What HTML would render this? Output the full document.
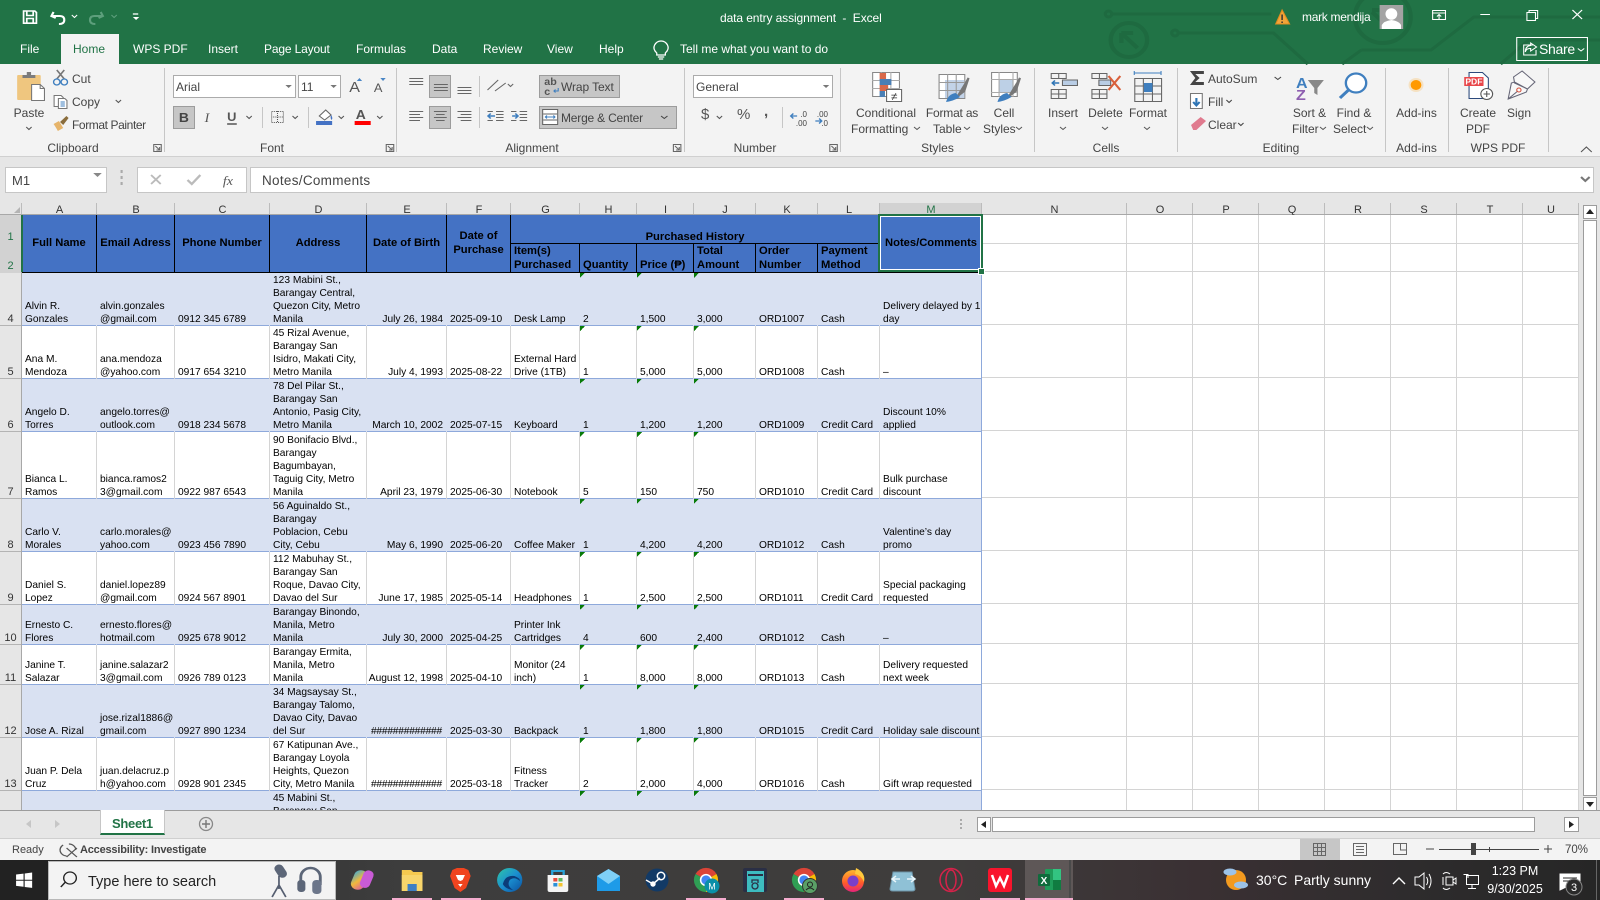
<!DOCTYPE html>
<html lang="en"><head><meta charset="utf-8"><title>data entry assignment - Excel</title>
<style>
*{box-sizing:border-box}
html,body{margin:0;padding:0;width:1600px;height:900px;overflow:hidden;background:#e6e6e6;font-family:"Liberation Sans",Arial,sans-serif}
.a{position:absolute}
.t{position:absolute;white-space:nowrap;font-size:12px;line-height:16px;color:#444}
.c{transform:translateX(-50%)}
.w{color:#fff}
.box{position:absolute;background:#fff;border:1px solid #ababab}
.sel{position:absolute;background:#c6c6c6;border:1px solid #9c9c9c}
#sheet{position:absolute;left:0;top:215px;width:982px;height:595px;overflow:hidden}
table{border-collapse:separate;border-spacing:0;table-layout:fixed;width:982px;font-size:10.2px;line-height:13px;color:#000}
td{padding:0 1px 0 3px;vertical-align:bottom;white-space:nowrap;overflow:hidden;border-right:1px solid transparent;box-shadow:inset 0 -1px 0 #8ea9db}
td.h{background:#e6e6e6;border-right:1px solid #a8a8a8;box-shadow:inset 0 -1px 0 #b4b4b4;text-align:center;padding:0;font-size:11px;color:#333;line-height:13px}
td.hs{background:#d2d2d2;box-shadow:none;color:#217346}
tr.b>td:not(.h){background-color:#d9e1f2}
tr.n>td:not(.h){background-color:#fff;border-right-color:#d4d4d4}
td.m{border-right:1px solid #8ea9db!important}
td.g{background-image:linear-gradient(135deg,#087a08 50%,transparent 50%);background-size:5px 5px;background-repeat:no-repeat;background-position:0 0}
td.r{text-align:right;padding-right:3px;padding-left:0}
td.x{background:#4472c4;border-right:1px solid #000;box-shadow:none;border-bottom:1px solid #000;font-weight:bold;font-size:11.2px;line-height:14px;text-align:center;padding:0 1px 2px;vertical-align:middle}
td.l{text-align:left;padding:0 0 0 3px;vertical-align:bottom}
#cols{position:absolute;left:0;top:203px;height:12px;width:1579px;display:flex;background:#e6e6e6;border-bottom:1px solid #a8a8a8}
#cols span{display:block;height:11px;line-height:15px;font-size:11px;color:#333;text-align:center;border-right:1px solid #bcbcbc;flex:none;padding-left:1px}
</style></head><body>

<!-- title bar and ribbon backgrounds -->
<div class="a" style="left:0;top:0;width:1600px;height:64px;background:#217346"></div>
<div class="a" style="left:0;top:64px;width:1600px;height:93px;background:#f3f3f3;border-bottom:1px solid #d0d0d0"></div>
<div class="a" style="left:61px;top:34px;width:58px;height:30px;background:#f3f3f3"></div>

<!-- ribbon controls -->
<div class="box" style="left:173px;top:75px;width:123px;height:23px"></div>
<div class="box" style="left:298px;top:75px;width:43px;height:23px"></div>
<div class="sel" style="left:173px;top:106px;width:22px;height:23px"></div>
<div class="sel" style="left:429px;top:75px;width:22px;height:23px"></div>
<div class="sel" style="left:429px;top:106px;width:22px;height:23px"></div>
<div class="sel" style="left:539px;top:75px;width:81px;height:23px"></div>
<div class="sel" style="left:539px;top:106px;width:138px;height:23px"></div>
<div class="box" style="left:693px;top:75px;width:140px;height:23px"></div>

<!-- formula bar -->
<div class="box" style="left:5px;top:167px;width:102px;height:26px;border-color:#c6c6c6"></div>
<div class="box" style="left:137px;top:167px;width:110px;height:26px;border-color:#c6c6c6"></div>
<div class="box" style="left:250px;top:167px;width:1344px;height:26px;border-color:#c6c6c6"></div>

<!-- column headers -->
<div id="cols">
<span style="width:22px"></span><span style="width:75px">A</span><span style="width:78px">B</span><span style="width:95px">C</span><span style="width:97px">D</span><span style="width:80px">E</span><span style="width:64px">F</span><span style="width:69px">G</span><span style="width:57px">H</span><span style="width:57px">I</span><span style="width:62px">J</span><span style="width:62px">K</span><span style="width:62px">L</span><span style="width:102px;background:#d2d2d2;color:#217346">M</span><span style="width:145px">N</span><span style="width:66px">O</span><span style="width:66px">P</span><span style="width:66px">Q</span><span style="width:66px">R</span><span style="width:66px">S</span><span style="width:66px">T</span><span style="width:56px">U</span>
</div>

<!-- empty grid right of data -->
<div class="a" style="left:982px;top:215px;width:597px;height:595px;background:#fff"></div>
<svg class="a" style="left:982px;top:215px" width="597" height="595" shape-rendering="crispEdges" stroke="#d4d4d4" stroke-width="1">
<path fill="none" d="M0 28.5H597M0 56.5H597M0 109.5H597M0 162.5H597M0 215.5H597M0 282.5H597M0 335.5H597M0 388.5H597M0 428.5H597M0 468.5H597M0 521.5H597M0 574.5H597M144.5 0V595M210.5 0V595M276.5 0V595M342.5 0V595M408.5 0V595M474.5 0V595M540.5 0V595M596.5 0V595"/>
</svg>

<!-- sheet data -->
<div id="sheet"><table>
<colgroup><col style="width:22px"><col style="width:75px"><col style="width:78px"><col style="width:95px"><col style="width:97px"><col style="width:80px"><col style="width:64px"><col style="width:69px"><col style="width:57px"><col style="width:57px"><col style="width:62px"><col style="width:62px"><col style="width:62px"><col style="width:102px"></colgroup>
<tr style="height:29px"><td class="h hs">1</td><td class="x" rowspan="2">Full Name</td><td class="x" rowspan="2">Email Adress</td><td class="x" rowspan="2">Phone Number</td><td class="x" rowspan="2">Address</td><td class="x" rowspan="2">Date of Birth</td><td class="x" rowspan="2">Date of<br>Purchase</td><td class="x" colspan="6" style="vertical-align:bottom;line-height:12px;padding-bottom:0">Purchased History</td><td class="x" rowspan="2" style="border-right:0">Notes/Comments</td></tr>
<tr style="height:28px"><td class="h hs">2</td><td class="x l">Item(s)<br>Purchased</td><td class="x l">Quantity</td><td class="x l">Price (₱)</td><td class="x l">Total<br>Amount</td><td class="x l">Order<br>Number</td><td class="x l">Payment<br>Method</td></tr>
<tr class="b" style="height:53px"><td class="h">4</td><td>Alvin R.<br>Gonzales</td><td>alvin.gonzales<br>@gmail.com</td><td>0912 345 6789</td><td>123 Mabini St.,<br>Barangay Central,<br>Quezon City, Metro<br>Manila</td><td class="r">July 26, 1984</td><td>2025-09-10</td><td>Desk Lamp</td><td class="g">2</td><td class="g">1,500</td><td class="g">3,000</td><td>ORD1007</td><td>Cash</td><td class="m">Delivery delayed by 1<br>day</td></tr>
<tr class="n" style="height:53px"><td class="h">5</td><td>Ana M.<br>Mendoza</td><td>ana.mendoza<br>@yahoo.com</td><td>0917 654 3210</td><td>45 Rizal Avenue,<br>Barangay San<br>Isidro, Makati City,<br>Metro Manila</td><td class="r">July 4, 1993</td><td>2025-08-22</td><td>External Hard<br>Drive (1TB)</td><td class="g">1</td><td class="g">5,000</td><td class="g">5,000</td><td>ORD1008</td><td>Cash</td><td class="m">–</td></tr>
<tr class="b" style="height:53px"><td class="h">6</td><td>Angelo D.<br>Torres</td><td>angelo.torres@<br>outlook.com</td><td>0918 234 5678</td><td>78 Del Pilar St.,<br>Barangay San<br>Antonio, Pasig City,<br>Metro Manila</td><td class="r">March 10, 2002</td><td>2025-07-15</td><td>Keyboard</td><td class="g">1</td><td class="g">1,200</td><td class="g">1,200</td><td>ORD1009</td><td>Credit Card</td><td class="m">Discount 10%<br>applied</td></tr>
<tr class="n" style="height:67px"><td class="h">7</td><td>Bianca L.<br>Ramos</td><td>bianca.ramos2<br>3@gmail.com</td><td>0922 987 6543</td><td>90 Bonifacio Blvd.,<br>Barangay<br>Bagumbayan,<br>Taguig City, Metro<br>Manila</td><td class="r">April 23, 1979</td><td>2025-06-30</td><td>Notebook</td><td class="g">5</td><td class="g">150</td><td class="g">750</td><td>ORD1010</td><td>Credit Card</td><td class="m">Bulk purchase<br>discount</td></tr>
<tr class="b" style="height:53px"><td class="h">8</td><td>Carlo V.<br>Morales</td><td>carlo.morales@<br>yahoo.com</td><td>0923 456 7890</td><td>56 Aguinaldo St.,<br>Barangay<br>Poblacion, Cebu<br>City, Cebu</td><td class="r">May 6, 1990</td><td>2025-06-20</td><td>Coffee Maker</td><td class="g">1</td><td class="g">4,200</td><td class="g">4,200</td><td>ORD1012</td><td>Cash</td><td class="m">Valentine’s day<br>promo</td></tr>
<tr class="n" style="height:53px"><td class="h">9</td><td>Daniel S.<br>Lopez</td><td>daniel.lopez89<br>@gmail.com</td><td>0924 567 8901</td><td>112 Mabuhay St.,<br>Barangay San<br>Roque, Davao City,<br>Davao del Sur</td><td class="r">June 17, 1985</td><td>2025-05-14</td><td>Headphones</td><td class="g">1</td><td class="g">2,500</td><td class="g">2,500</td><td>ORD1011</td><td>Credit Card</td><td class="m">Special packaging<br>requested</td></tr>
<tr class="b" style="height:40px"><td class="h">10</td><td>Ernesto C.<br>Flores</td><td>ernesto.flores@<br>hotmail.com</td><td>0925 678 9012</td><td>Barangay Binondo,<br>Manila, Metro<br>Manila</td><td class="r">July 30, 2000</td><td>2025-04-25</td><td>Printer Ink<br>Cartridges</td><td class="g">4</td><td class="g">600</td><td class="g">2,400</td><td>ORD1012</td><td>Cash</td><td class="m">–</td></tr>
<tr class="n" style="height:40px"><td class="h">11</td><td>Janine T.<br>Salazar</td><td>janine.salazar2<br>3@gmail.com</td><td>0926 789 0123</td><td>Barangay Ermita,<br>Manila, Metro<br>Manila</td><td class="r">August 12, 1998</td><td>2025-04-10</td><td>Monitor (24<br>inch)</td><td class="g">1</td><td class="g">8,000</td><td class="g">8,000</td><td>ORD1013</td><td>Cash</td><td class="m">Delivery requested<br>next week</td></tr>
<tr class="b" style="height:53px"><td class="h">12</td><td>Jose A. Rizal</td><td>jose.rizal1886@<br>gmail.com</td><td>0927 890 1234</td><td>34 Magsaysay St.,<br>Barangay Talomo,<br>Davao City, Davao<br>del Sur</td><td class="r" style="letter-spacing:-.2px;padding-right:4px">#############</td><td>2025-03-30</td><td>Backpack</td><td class="g">1</td><td class="g">1,800</td><td class="g">1,800</td><td>ORD1015</td><td>Credit Card</td><td class="m">Holiday sale discount</td></tr>
<tr class="n" style="height:53px"><td class="h">13</td><td>Juan P. Dela<br>Cruz</td><td>juan.delacruz.p<br>h@yahoo.com</td><td>0928 901 2345</td><td>67 Katipunan Ave.,<br>Barangay Loyola<br>Heights, Quezon<br>City, Metro Manila</td><td class="r" style="letter-spacing:-.2px;padding-right:4px">#############</td><td>2025-03-18</td><td>Fitness<br>Tracker</td><td class="g">2</td><td class="g">2,000</td><td class="g">4,000</td><td>ORD1016</td><td>Cash</td><td class="m">Gift wrap requested</td></tr>
<tr class="b" style="height:53px"><td class="h"></td><td></td><td></td><td></td><td style="vertical-align:top;padding-top:1px">45 Mabini St.,<br>Barangay San</td><td></td><td></td><td></td><td class="g"></td><td class="g"></td><td class="g"></td><td></td><td></td><td class="m"></td></tr>
</table></div>

<!-- selection -->
<div class="a" style="left:21px;top:215px;width:2px;height:57px;background:#217346"></div>
<div class="a" style="left:878px;top:214px;width:105px;height:58px;border:2px solid #217346"><div style="width:100%;height:100%;border:1px solid #fff"></div></div>
<div class="a" style="left:978px;top:268px;width:7px;height:7px;background:#217346;border:1px solid #fff"></div>

<!-- scroll area -->
<div class="a" style="left:1579px;top:203px;width:21px;height:608px;background:#e6e6e6"></div>
<div class="a" style="left:0;top:810px;width:1600px;height:28px;background:#e6e6e6;border-top:1px solid #9c9c9c"></div>
<div class="a" style="left:0;top:838px;width:1600px;height:22px;background:#f3f3f3;border-top:1px solid #cfcfcf"></div>
<div class="a" style="left:1300px;top:839px;width:40px;height:21px;background:#c6c6c6"></div>
<div class="a" style="left:100px;top:810px;width:65px;height:25px;background:#fff;border-left:1px solid #c6c6c6;border-right:1px solid #c6c6c6;border-bottom:2px solid #217346"></div>
<div class="box" style="left:1583px;top:205px;width:14px;height:14px;border-color:#9c9c9c"></div>
<div class="box" style="left:1583px;top:220px;width:14px;height:576px;border-color:#9c9c9c"></div>
<div class="box" style="left:1583px;top:797px;width:14px;height:14px;border-color:#9c9c9c"></div>
<div class="box" style="left:977px;top:817px;width:14px;height:15px;border-color:#9c9c9c"></div>
<div class="box" style="left:992px;top:817px;width:543px;height:15px;border-color:#9c9c9c"></div>
<div class="box" style="left:1564px;top:817px;width:15px;height:15px;border-color:#9c9c9c"></div>

<!-- taskbar -->
<div class="a" style="left:0;top:860px;width:1600px;height:40px;background:linear-gradient(90deg,#2a2a2a 0,#3d3d3d 25%,#3f3d3c 60%,#3a3033 75%,#2e2c2d 88%,#262626 100%)"></div>
<div class="a" style="left:0;top:860px;width:48px;height:40px;background:#222"></div>
<div class="a" style="left:48px;top:861px;width:288px;height:39px;background:#f3f3f3;border:1px solid #b8b8b8"></div>
<div class="a" style="left:1025px;top:860px;width:48px;height:40px;background:#5e5757"></div>

<!-- icons -->
<svg class="a" style="left:0;top:0" width="1600" height="900" font-family="Liberation Sans,Arial,sans-serif">
<defs>
<g id="chrome"><path fill="#db4437" d="M0 0L-9.53-5.5A11 11 0 0 1 9.53-5.5Z"/><path fill="#fbbc05" d="M0 0L9.53-5.5A11 11 0 0 1 0 11Z"/><path fill="#2f9e54" d="M0 0L0 11A11 11 0 0 1-9.53-5.5Z"/><circle r="5.6" fill="#fff"/><circle r="4.2" fill="#4285f4"/></g>
<linearGradient id="edge" x1="0" y1="0" x2="1" y2="1"><stop offset="0" stop-color="#2fc7a8"/><stop offset=".5" stop-color="#1a8fd0"/><stop offset="1" stop-color="#0c4f9f"/></linearGradient>
<linearGradient id="cop" x1="0" y1="0" x2="1" y2="1"><stop offset="0" stop-color="#2fa9e0"/><stop offset=".5" stop-color="#f2b93b"/><stop offset="1" stop-color="#d94fb0"/></linearGradient>
<linearGradient id="ff" x1="0" y1="0" x2="0" y2="1"><stop offset="0" stop-color="#ffb52e"/><stop offset=".6" stop-color="#ff5a2a"/><stop offset="1" stop-color="#e5237b"/></linearGradient>
</defs>

<!-- left ribbon group -->
<g transform="matrix(1.0714 0 0 1 0 0)">
<g fill="none" stroke="#fff" stroke-width="1.6"><path d="M22 11H32.5L34 12.5V23.2H22Z"/><path d="M25 11V15.5H31V11M25 23V18.5H31V23"/>
<path d="M50 12L48 16L52 18M48.5 16H56Q60 16 60 20Q60 24 55 24" stroke-width="2"/><path d="M67 15l2.5 2.5 2.5-2.5" stroke-width="1"/>
<path d="M94 12L96 16L92 18M95.500 16H88Q84 16 84 20Q84 24 89 24" stroke="#5d9f7c" stroke-width="2"/><path d="M104 15l2.5 2.5 2.5-2.500" stroke="#5d9f7c" stroke-width="1"/>
<path d="M124 14H129" stroke-width="1.3"/></g><path fill="#fff" d="M124 17H130L127 20Z"/>

<g fill="none" stroke="#666"><path d="M143.5 144.5H150.5V151.5H143.5ZM145 146L149 150M146 150H149V147"/>
<path d="M360.5 144.5H367.5V151.5H360.5ZM362 146L366 150M363 150H366V147"/></g>

<rect x="16" y="75" width="22" height="25" rx="1" fill="#efc67f"/><path d="M21 78V75H25V72H29V75H33V78Z" fill="#7c7c7c"/>
<path d="M29.5 84.5H37.5L41.500 88.5V100.5H29.5Z" fill="#fff" stroke="#777"/><path d="M37.5 84.5V88.5H41.5" fill="none" stroke="#777"/>
<path d="M53 79L60 70M60 79L53 70" stroke="#777" stroke-width="1.5"/><circle cx="53" cy="82" r="3" fill="none" stroke="#3f7fbf" stroke-width="1.3"/><circle cx="60" cy="82" r="3" fill="none" stroke="#3f7fbf" stroke-width="1.3"/>
<g fill="#fff" stroke="#777"><path d="M50.5 95.5H57L59 97.5V106.5H50.5Z"/><path d="M54.5 98.5H60.5L62.5 100.5V108.5H54.5Z"/></g><path d="M56.5 102H60.5M56.5 104H60.500M56.5 106H60.5" stroke="#3f7fbf"/>
<path d="M50 124L55 121L59 128L54 131Q52 127 50 124Z" fill="#e6b46a"/><path d="M56 122L62 116L64 118L59 125Z" fill="#8a6d3c"/>
<g fill="none" stroke="#555"><path d="M24.5 127l2.5 2.5 2.5-2.5M108 100l2.5 2.5 2.5-2.5"/></g>

<path fill="#777" d="M266.400 85H272.400L269.400 88ZM308.400 85H314.400L311.400 88Z"/>
<path fill="#4a86c5" d="M333 81l2.5-3 2.5 3ZM355 78H360L357.500 81Z"/>
<text x="326" y="92" font-size="15" fill="#555">A</text><text x="349" y="92" font-size="12" fill="#555">A</text>
<text x="167" y="122" font-size="13" font-weight="bold" fill="#444">B</text><text x="191" y="122" font-size="13" font-style="italic" font-family="Liberation Serif,serif" fill="#555">I</text><text x="212" y="121" font-size="12" font-weight="bold" fill="#555">U</text><path d="M212 124H221" stroke="#555" stroke-width="1.5"/>
<g fill="none" stroke="#555"><path d="M230 116l2.500 2.500 2.500-2.500M273 116l2.500 2.500 2.500-2.500M316 116l2.500 2.500 2.500-2.500M352 116l2.500 2.500 2.500-2.500"/><rect x="253.500" y="111.500" width="11" height="11" stroke-dasharray="1 1"/><path d="M259 111V123M253 117H265" stroke-dasharray="1 1"/></g>
<path d="M298 116L304 110L309 115L303 120Z" fill="#fff" stroke="#666"/><path d="M309 115Q311 118 309.500 120Q308 118 309 115" fill="#4472c4"/><rect x="295" y="121" width="15" height="4" fill="#4472c4"/>
<text x="332" y="119" font-size="13" font-weight="bold" fill="#555">A</text><rect x="331" y="121" width="15" height="4" fill="#f00"/>

<g stroke="#666" fill="none">
<path d="M382 78.500H395M382 81.500H395M382 84.500H395"/>
<path d="M405 84.500H418M405 87.500H418M405 90.500H418"/>
<path d="M427 87.500H440M427 90.500H440M427 93.500H440"/>
<path d="M382 111.500H395M382 114.500H392M382 117.500H395M382 120.500H392"/>
<path d="M405 111.500H417M407 114.500H415M405 117.500H417M407 120.500H415"/>
<path d="M427 111.500H440M430 114.500H440M427 117.500H440M430 120.500H440"/>
<path d="M463 111.500H470M463 114.500H470M463 117.500H470M463 120.500H470M455 111.500H460M455 120.500H460"/>
<path d="M485 111.500H492M485 114.500H492M485 117.500H492M485 120.500H492M477 111.500H482M477 120.500H482"/>
<path d="M455 90L465 80M462 91L472 83M474 84l2.500 2.500 2.500-2.500"/>
</g>
<path stroke="#3f7fbf" stroke-width="1.500" fill="none" d="M462 116H456M458 113.500L455.500 116 458 118.500M478 116H483M481 113.500L483.500 116 481 118.500"/>
<text x="508" y="85" font-size="10" font-weight="bold" fill="#555">ab</text><text x="508" y="95" font-size="10" font-weight="bold" fill="#555">c</text><path d="M521 88V91H517M518.500 89.500L517 91 518.500 92.500" stroke="#3f7fbf" fill="none"/>
<rect x="506.500" y="109.500" width="14" height="15" fill="#fff" stroke="#666"/><path d="M507 114H520M507 120H520" stroke="#666"/><path d="M509 117H518M510.500 115.500L509 117 510.500 118.500M516.500 115.500L518 117 516.500 118.500" stroke="#3f7fbf" fill="none"/>

<path d="M87 173H95L91 177Z" fill="#888"/>
<path d="M113.500 170V173M113.500 176V179M113.500 182V185" stroke="#aaa" stroke-width="2"/>
<path d="M141 175L150 184M150 175L141 184" stroke="#bbb" stroke-width="1.800"/>
<path d="M175 180L179 184 187 175" stroke="#bbb" stroke-width="2.200" fill="none"/>
<text x="208" y="185" font-size="13" font-style="italic" font-family="Liberation Serif,serif" fill="#555">fx</text>
</g>

<!-- middle ribbon group -->
<g transform="matrix(1.0714 0 0 1 -38.57 0)">
<g fill="none" stroke="#fff" stroke-width="1.200"><path d="M649 53Q645 49 647 45Q649 41 653 41Q657 41 659 45Q661 49 657 53V55H649Z"/><path d="M650 57H656M651 59H655"/></g>
<g fill="none" stroke="#666"><path d="M664.500 144.500H671.500V151.500H664.500ZM666 146L670 150M667 150H670V147"/>
<path d="M810.500 144.500H817.500V151.500H810.500ZM812 146L816 150M813 150H816V147"/></g>
<path d="M653 116l3 2.500 3-2.500" fill="none" stroke="#444"/>
<path fill="#777" d="M804 85H810L807 88Z"/>
<path d="M705 116l2.500 2.500 2.500-2.500" fill="none" stroke="#555"/>
<path d="M774 116H780M776.500 113.500L774 116 776.500 118.500M797 121H803M800.500 118.500L803 121 800.500 123.500" fill="none" stroke="#3f7fbf" stroke-width="1.300"/>
<rect x="850.500" y="72.500" width="25" height="24" fill="#fff" stroke="#888"/><path stroke="#aaa" d="M850 80.500H876M850 88.500H876M858.500 72V97M867.500 72V97"/><rect x="857" y="73" width="6" height="7" fill="#d9694a"/><rect x="857" y="79" width="11" height="6" fill="#4a7fb5"/><rect x="857" y="85" width="8" height="6" fill="#d9694a"/><rect x="857" y="91" width="5" height="6" fill="#4a7fb5"/>
<rect x="863.500" y="89.500" width="14" height="12" fill="#fff" stroke="#666"/><text x="870.500" y="100" font-size="11" fill="#333" text-anchor="middle">≠</text>
<rect x="912.500" y="74.500" width="24" height="24" fill="#fff" stroke="#888"/><rect x="918" y="80" width="18" height="18" fill="#c3d3e8"/><path stroke="#999" d="M912 82.500H936M912 90.500H936M920.500 74V98M928.500 74V98"/><path d="M930 96L938 82L940 78L936 91Z" fill="#777" stroke="#777" stroke-width="2"/><path d="M919 102Q921 94 928 93L932 97Q926 101 919 102Z" fill="#3f7fbf"/>
<rect x="961.500" y="72.500" width="24" height="24" fill="#fff" stroke="#888"/><rect x="968" y="79" width="14" height="13" fill="#bdd0e6"/><path stroke="#aaa" d="M961 79.500H985M961 92.500H985M968.500 72V97M981.500 72V97"/><path d="M978 96L986 82L988 78L984 91Z" fill="#777" stroke="#777" stroke-width="2"/><path d="M967 102Q969 94 976 93L980 97Q974 101 967 102Z" fill="#3f7fbf"/>
</g>

<!-- right ribbon group -->
<g transform="matrix(1.0714 0 0 1 -74.29 0)">
<g fill="none" stroke="#1e6a40" stroke-width="3">
<circle cx="1104" cy="14" r="3"/><path d="M1107 14H1256"/>
<circle cx="1123" cy="40" r="17" stroke-width="4"/><path d="M1116 33V43M1116 33H1127M1117 34L1131 48" stroke-width="4"/>
<circle cx="1166" cy="33" r="3"/><path d="M1169 33H1258L1290 64"/>
<circle cx="1360" cy="17" r="26" stroke-width="4"/><path d="M1350 12L1362 24M1350 10H1364" stroke-width="4"/>
<path d="M1340 50H1405L1445 17H1620M1340 50L1322 64M1470 64L1496 40H1620"/>
</g>
<path d="M1266 10L1273 24H1260Z" fill="#f3a53a" stroke="#e08d1f"/><path d="M1266 14.500V20M1266 21.500V23" stroke="#333" stroke-width="1.400"/>
<rect x="1357" y="5" width="22" height="24" fill="#a3a3a3"/><ellipse cx="1368" cy="14" rx="5.500" ry="5.800" fill="#fff"/><path d="M1359 29V25Q1361 21 1368 20Q1375 21 1377 25V29Z" fill="#fff"/>
<g fill="none" stroke="#fff"><rect x="1406.500" y="10.500" width="12" height="9"/><path d="M1406 13H1419M1412.500 19V15M1410.500 16.500l2-2 2 2"/>
<path d="M1451 14.500H1460"/><rect x="1494.500" y="12.500" width="8" height="8"/><path d="M1496.500 12.500V10.500H1504.500V18.500H1502.500"/>
<path d="M1537 10L1546 19M1546 10L1537 19" stroke-width="1.200"/>
<rect x="1485" y="37.500" width="66" height="23"/>
<path d="M1500 45H1491.500V55H1503V50M1498 43L1503.500 47 1498 51V48.500Q1494 48 1493 52Q1493 46 1498 45.500Z"/><path d="M1542 48.500l3 2.500 3-2.500"/></g>

<g fill="none" stroke="#666"><path d="M1050.500 73.500H1064.500V78.500H1050.500ZM1057.500 73V79M1050.500 89.500H1064.500V98.500H1050.500ZM1050.500 94H1064.500M1057.500 89V99"/>
<path d="M1088.500 73.500H1102.500V78.500H1088.500ZM1095.500 73V79M1088.500 89.500H1102.500V98.500H1088.500ZM1088.500 94H1102.500M1095.500 89V99"/>
<path d="M1128.500 78.500H1153.500V101.500H1128.500ZM1128 86H1154M1128 94H1154M1136.500 78V101M1145 78V101"/></g>
<rect x="1061" y="80" width="14" height="5.500" fill="#b9cde5" stroke="#666"/><path d="M1051 83H1058M1054 80.500L1051.500 83 1054 85.500" fill="none" stroke="#2f75b5" stroke-width="1.500"/>
<rect x="1095" y="80" width="11" height="5.500" fill="#b9cde5" stroke="#666"/><path d="M1104 76L1115 90M1115 76L1104 90" stroke="#d9603b" stroke-width="2"/>
<rect x="1137" y="83" width="8" height="9" fill="#3f7fbf"/><path d="M1128 73H1153M1128 71V75M1153 71V75" stroke="#3f7fbf" fill="none"/>

<path d="M1180 71H1193V74H1185L1189 78L1185 82H1193V85H1180L1185 78Z" fill="#444"/>
<path d="M1259 77l3 2.500 3-2.500M1214 100l2.500 2.500 2.500-2.500M1225 123l2.500 2.500 2.500-2.500" fill="none" stroke="#444"/>
<rect x="1180.500" y="93.500" width="11" height="15" fill="#fff" stroke="#777"/><path d="M1186 98V105M1183 102L1186 105.500 1189 102" fill="none" stroke="#2f75b5" stroke-width="2"/>
<path d="M1181 125L1190 117L1195 121L1186 130H1183Z" fill="#e07a8e"/>
<text x="1279" y="88" font-size="15" font-weight="bold" fill="#3f7fbf">A</text><text x="1279" y="100" font-size="15" font-weight="bold" fill="#8e5fb0">Z</text><path d="M1290 80H1305L1299 88V95L1296 93V88Z" fill="#888"/>
<circle cx="1335" cy="83" r="9.500" fill="#fff" stroke="#3f7fbf" stroke-width="2.200"/><path d="M1328 90L1320 98" stroke="#3f7fbf" stroke-width="3"/>

<ellipse cx="1391" cy="85" rx="5" ry="5" fill="#f90"/><ellipse cx="1391" cy="85" rx="7" ry="7" fill="#f90" opacity=".2"/>

<path d="M1440.500 72.500H1453L1458.500 78V98.500H1440.500Z" fill="#fff" stroke="#2c4a7c"/>
<rect x="1436" y="77" width="18" height="9" fill="#e8464a"/><text x="1445" y="84.500" font-size="8" font-weight="bold" fill="#fff" text-anchor="middle">PDF</text>
<circle cx="1457" cy="94" r="5.500" fill="#fff" stroke="#555"/><path d="M1457 91V97M1454 94H1460" stroke="#555"/>
<path d="M1482 77L1490 71L1502 82L1495 89L1483 83ZM1477 99L1480 83L1483 82L1495 89L1494 92ZM1477 99L1486 91" fill="#f8f8f8" stroke="#667"/><circle cx="1487" cy="90" r="2" fill="none" stroke="#d9503b"/>
<path d="M1545 152l5-5 5 5" fill="none" stroke="#555"/>
<path d="M1545 177l4 4 4-4" fill="none" stroke="#777" stroke-width="2"/>
</g>

<!-- group separators -->
<path stroke="#c6c6c6" d="M164.500 68V152M396.500 68V152M684.500 68V152M840.500 68V152M1034.500 68V152M1177.500 68V152M1385.500 68V152M1448.500 68V152M1548.500 68V152M262.500 107V128M308.500 107V128M479.500 76V97M479.500 107V128M782.500 107V128"/>

<!-- large-button chevrons -->
<path fill="none" stroke="#555" d="M914 127l3 2.500 3-2.500M964 127l3 2.500 3-2.500M1016 127l3 2.500 3-2.500M1060 127l3 2.500 3-2.500M1102 127l3 2.500 3-2.500M1144 127l3 2.500 3-2.500M1320 127l3 2.500 3-2.500M1367 127l3 2.500 3-2.500"/>

<!-- col corner / scrollbar arrows -->
<path d="M14 213L20 213 20 207Z" fill="#b4b4b4"/>
<path d="M1586 214L1590 209 1594 214Z M1586 802H1594L1590 807Z M986 821V828L981 824.500Z M1569 821V828L1574 824.500Z" fill="#222"/>

<!-- tabs nav -->
<path d="M31 820V828L26 824Z M55 820V828L60 824Z" fill="#c6c6c6"/>
<circle cx="206" cy="824" r="6.500" fill="none" stroke="#888" stroke-width="1.300"/><path d="M206 820V828M202 824H210" stroke="#777" stroke-width="1.400"/>
<path d="M961 819V821M961 823V825M961 827V829" stroke="#aaa" stroke-width="2"/>

<!-- status bar -->
<g fill="none" stroke="#666"><path d="M1313.500 843.500H1325.500V855.500H1313.500ZM1313 847.500H1326M1313 851.500H1326M1317.500 843V856M1321.500 843V856"/>
<path d="M1353.500 843.500H1366.500V855.500H1353.500ZM1356 846.500H1364M1356 849.500H1364M1356 852.500H1364"/>
<path d="M1393.500 843.500H1406.500V854.500H1393.500ZM1400.500 843V850H1406"/></g>
<path d="M1426 849H1434M1544 849H1552M1548 845V853" stroke="#444"/><path d="M1439 849.500H1539M1489.500 847V852" stroke="#444"/><rect x="1471" y="843" width="5" height="12" fill="#444"/>

<!-- left taskbar group -->
<g transform="matrix(1.148 0 0 1 0 0)">
<path d="M55 845A6 6 0 0 0 58 856M60 844A6 6 0 0 1 66 850M58 848L67 857M67 848L58 857" fill="none" stroke="#555" stroke-width="1.200"/>
<path d="M14 874.500L20.500 873.600V879.700H14ZM21.500 873.500L28 872.500V879.700H21.500ZM14 880.700H20.500V886.800L14 885.900ZM21.500 880.700H28V887.900L21.500 887Z" fill="#fff"/>
<ellipse cx="61" cy="878" rx="5.500" ry="6" fill="none" stroke="#222" stroke-width="1.200"/><path d="M57 882L53 887" stroke="#222" stroke-width="1.400"/>
<g transform="rotate(-30 245 872)"><rect x="241" y="864" width="8" height="14" rx="4" fill="#5c6678"/></g><path d="M243 876V889M243 885L237 897M243 885L249 897" stroke="#555e70" stroke-width="1.500" fill="none"/>
<path d="M262 885V877A8.500 9 0 0 1 279 877V885" fill="none" stroke="#5c6678" stroke-width="2.500"/><rect x="259" y="880" width="7" height="12" rx="3" fill="#5c6678"/><rect x="272" y="880" width="8" height="14" rx="3.500" fill="#6c768a"/>
<rect x="307" y="870" width="12" height="20" rx="6" fill="url(#cop)" transform="rotate(20 313 880)"/><rect x="315" y="870" width="9" height="18" rx="4.500" fill="#c95bd6" transform="rotate(20 319 879)"/>
<path d="M350 870H358L360 872H368V891H350Z" fill="#f5c94f"/><rect x="350" y="875" width="18" height="16" fill="#f7d56b"/><path d="M355 891V884H363V891Z" fill="#3d7fc4"/>
<path d="M394 870L398 868H404L408 870L410 876L406 888L401 892L396 888L392 876Z" fill="#f0441f"/><path d="M397 875H405L403 880L401 881L399 880ZM399 884H403L401 887Z" fill="#fff"/>
<ellipse cx="444" cy="880" rx="11" ry="12" fill="url(#edge)"/><path d="M438 884Q440 875 448 876Q453 878 453 881Q448 876 444 880Q441 886 447 890Q440 889 438 884Z" fill="#0b3d7a"/>
<path d="M477 875H495V890Q495 892 493 892H479Q477 892 477 890Z" fill="#f4f4f4"/><path d="M481 875V871H491V875" fill="none" stroke="#2aa3d8" stroke-width="2"/><rect x="482" y="878" width="3.500" height="3.500" fill="#e74c3c"/><rect x="486.500" y="878" width="3.500" height="3.500" fill="#5cb85c"/><rect x="482" y="883" width="3.500" height="3.500" fill="#2a8fd8"/><rect x="486.500" y="883" width="3.500" height="3.500" fill="#f4c430"/>
</g>

<!-- mail -->
<path d="M597 876L608.500 869L620 876V891H597Z" fill="#1e9be8"/><path d="M597 876L608.500 884L620 876L608.500 869Z" fill="#7fd0f7"/>
<circle cx="657" cy="880" r="11.500" fill="#123a66"/><circle cx="661" cy="876" r="3.700" fill="none" stroke="#fff" stroke-width="1.500"/><circle cx="653" cy="884" r="2.700" fill="#fff"/><path d="M646 880L653 884L660 878" stroke="#fff" stroke-width="1.500" fill="none"/>
<use href="#chrome" transform="translate(706 880) scale(1.100)"/><circle cx="712" cy="886" r="7.500" fill="#0b8fa8"/><text x="712" y="889.500" font-size="9" fill="#fff" text-anchor="middle">M</text>
<rect x="743" y="868" width="24" height="24" rx="2" fill="#2a2f45"/><rect x="747" y="871" width="17" height="21" fill="#3dbcc0"/><path d="M748 875H763" stroke="#2a2f45" stroke-width="2"/><circle cx="755" cy="886" r="3" fill="none" stroke="#2a2f45" stroke-width="1.300"/><path d="M752 883V880H758V883" fill="none" stroke="#2a2f45" stroke-width="1.300"/>
<use href="#chrome" transform="translate(804 880) scale(1.100)"/><circle cx="810" cy="886" r="7.500" fill="#5a9f66" stroke="#333"/><circle cx="810" cy="884.500" r="2.500" fill="none" stroke="#222"/><path d="M806 890Q810 886 814 890" fill="none" stroke="#222"/>
<circle cx="853" cy="881" r="11" fill="url(#ff)"/><circle cx="853" cy="881" r="5.500" fill="#7b3fc9"/><path d="M856 868Q866 873 864 882Q861 875 855 874Z" fill="#ffc93c"/>
<path d="M893 872H912L915 889Q915 891 912 891H893Q890 891 890 889Z" fill="#8fc1d6" stroke="#6d93a6"/><path d="M896 876L892 879 896 882M911 876L915 879 911 882M893 879H900M907 879H915" stroke="#e8f6fb" stroke-width="1.500" fill="none"/>
<ellipse cx="951" cy="880" rx="11" ry="11.500" fill="none" stroke="#d6224a" stroke-width="1.500"/><ellipse cx="951" cy="880" rx="5" ry="10" fill="none" stroke="#d6224a" stroke-width="1.500"/>
<rect x="988" y="868" width="24" height="24" rx="3" fill="#f9142c"/><path d="M992 875L996 886 1000 878 1004 886 1008 875" fill="none" stroke="#fff" stroke-width="2.500"/>
<rect x="1045" y="869" width="16" height="21" rx="1" fill="#1f9d5a"/><rect x="1053" y="869" width="8" height="11" fill="#33c481"/><rect x="1053" y="880" width="8" height="10" fill="#107c41"/><rect x="1038" y="874" width="12" height="12" rx="1" fill="#106b3c"/><text x="1044" y="884" font-size="10" font-weight="bold" fill="#fff" text-anchor="middle">X</text>
<rect x="1069" y="860" width="2" height="40" fill="#4a4a4a"/>
<g fill="#f4acce"><rect x="392" y="898" width="40" height="2"/><rect x="441" y="898" width="40" height="2"/><rect x="686" y="898" width="40" height="2"/><rect x="784" y="898" width="40" height="2"/><rect x="980" y="898" width="40" height="2"/><rect x="1025" y="898" width="48" height="2"/></g>
<circle cx="1236" cy="880" r="10" fill="#f29a1f"/><ellipse cx="1230" cy="872" rx="6.500" ry="3.500" fill="#9cc3e8"/><ellipse cx="1241" cy="885" rx="7" ry="3.500" fill="#9cc3e8"/>
<g fill="none" stroke="#fff"><path d="M1393 884L1399 878 1405 884" stroke-width="1.400"/><path d="M1415 877H1419L1424 873V889L1419 885H1415ZM1426.500 877Q1429 881 1426.500 885M1429 874Q1433 881 1429 888" stroke-width="1"/>
<rect x="1446" y="877" width="7" height="8"/><path d="M1453 880L1456 878V884L1453 882M1443 874Q1446 871 1450 874M1443 888Q1446 891 1450 888M1443 877V885"/>
<rect x="1466.500" y="875.500" width="12" height="9"/><path d="M1472 885V888M1468 888.500H1476M1463.500 874.500H1468V878"/>
<path d="M1560 874H1580V886H1568L1560 890Z" fill="#fff"/></g>
<circle cx="1574" cy="887" r="8" fill="#2a2a2a" stroke="#888"/><text x="1574" y="891" font-size="11" fill="#fff" text-anchor="middle">3</text>
<path d="M1563 878H1577M1563 881H1577" stroke="#2a2a2a"/>
<rect x="1596" y="860" width="1" height="40" fill="#666"/>
</svg>

<!-- tabs text -->
<div class="t w" style="left:20px;top:41px">File</div>
<div class="t" style="left:73px;top:41px;color:#217346">Home</div>
<div class="t w" style="left:133px;top:41px">WPS PDF</div>
<div class="t w" style="left:208px;top:41px">Insert</div>
<div class="t w" style="left:264px;top:41px;letter-spacing:-.15px">Page Layout</div>
<div class="t w" style="left:356px;top:41px">Formulas</div>
<div class="t w" style="left:432px;top:41px">Data</div>
<div class="t w" style="left:483px;top:41px">Review</div>
<div class="t w" style="left:547px;top:41px">View</div>
<div class="t w" style="left:599px;top:41px">Help</div>
<div class="t w" style="left:680px;top:41px">Tell me what you want to do</div>
<div class="t w" style="left:720px;top:10px;letter-spacing:-.1px">data entry assignment &nbsp;-&nbsp; Excel</div>
<div class="t w" style="left:1302px;top:9px;letter-spacing:-.3px">mark mendija</div>
<div class="t w" style="left:1539px;top:41px;font-size:14px;letter-spacing:-.3px">Share</div>

<!-- ribbon text -->
<div class="t c" style="left:29px;top:105px">Paste</div>
<div class="t" style="left:72px;top:71px">Cut</div>
<div class="t" style="left:72px;top:94px">Copy</div>
<div class="t" style="left:72px;top:117px;letter-spacing:-.4px">Format Painter</div>
<div class="t" style="left:176px;top:79px">Arial</div>
<div class="t" style="left:301px;top:79px">11</div>
<div class="t" style="left:561px;top:79px;letter-spacing:-.1px">Wrap Text</div>
<div class="t" style="left:561px;top:110px;letter-spacing:-.2px">Merge &amp; Center</div>
<div class="t" style="left:696px;top:79px">General</div>
<div class="t" style="left:701px;top:107px;font-size:15px;color:#555">$</div>
<div class="t" style="left:737px;top:107px;font-size:15px;color:#555">%</div>
<div class="t" style="left:764px;top:104px;font-size:15px;font-weight:bold;color:#555">,</div>
<div class="t" style="left:795px;top:110px;font-size:8px;line-height:9px;text-align:right;width:12px">.0<br>.00</div>
<div class="t" style="left:816px;top:110px;font-size:8px;line-height:9px;text-align:right;width:12px">.00<br>.0</div>
<div class="t c" style="left:886px;top:105px">Conditional</div>
<div class="t" style="left:851px;top:121px">Formatting</div>
<div class="t c" style="left:952px;top:105px;letter-spacing:-.2px">Format as</div>
<div class="t" style="left:933px;top:121px">Table</div>
<div class="t c" style="left:1004px;top:105px">Cell</div>
<div class="t" style="left:983px;top:121px">Styles</div>
<div class="t c" style="left:1063px;top:105px">Insert</div>
<div class="t c" style="left:1105.500px;top:105px">Delete</div>
<div class="t c" style="left:1148px;top:105px">Format</div>
<div class="t" style="left:1208px;top:71px">AutoSum</div>
<div class="t" style="left:1208px;top:94px">Fill</div>
<div class="t" style="left:1208px;top:117px">Clear</div>
<div class="t c" style="left:1309.500px;top:105px">Sort &amp;</div>
<div class="t" style="left:1292px;top:121px">Filter</div>
<div class="t c" style="left:1354px;top:105px">Find &amp;</div>
<div class="t" style="left:1333px;top:121px">Select</div>
<div class="t c" style="left:1416.500px;top:105px">Add-ins</div>
<div class="t c" style="left:1478px;top:105px">Create</div>
<div class="t c" style="left:1478px;top:121px">PDF</div>
<div class="t c" style="left:1519px;top:105px">Sign</div>

<!-- group labels -->
<div class="t c" style="left:73px;top:140px">Clipboard</div>
<div class="t c" style="left:272px;top:140px">Font</div>
<div class="t c" style="left:532px;top:140px">Alignment</div>
<div class="t c" style="left:755px;top:140px">Number</div>
<div class="t c" style="left:937.500px;top:140px">Styles</div>
<div class="t c" style="left:1106px;top:140px">Cells</div>
<div class="t c" style="left:1281px;top:140px">Editing</div>
<div class="t c" style="left:1416.500px;top:140px">Add-ins</div>
<div class="t c" style="left:1498px;top:140px">WPS PDF</div>

<!-- formula bar text -->
<div class="t" style="left:12px;top:173px;font-size:13px">M1</div>
<div class="t" style="left:262px;top:173px;font-size:13.500px;color:#444;letter-spacing:.3px">Notes/Comments</div>

<!-- status + sheet -->
<div class="t" style="left:112px;top:816px;font-size:13px;font-weight:bold;color:#217346;letter-spacing:-.3px">Sheet1</div>
<div class="t" style="left:12px;top:842px;font-size:11px">Ready</div>
<div class="t" style="left:80px;top:842px;font-size:11px;font-weight:bold;letter-spacing:-.2px">Accessibility: Investigate</div>
<div class="t" style="left:1565px;top:842px;font-size:11.500px">70%</div>

<!-- taskbar text -->
<div class="t" style="left:88px;top:874px;font-size:14.500px;color:#222">Type here to search</div>
<div class="t w" style="left:1256px;top:872px;font-size:14px">30°C</div>
<div class="t w" style="left:1294px;top:872px;font-size:14px">Partly sunny</div>
<div class="t w c" style="left:1515px;top:863px;font-size:12.500px">1:23 PM</div>
<div class="t w c" style="left:1515px;top:881px;font-size:12.500px">9/30/2025</div>
</body></html>
